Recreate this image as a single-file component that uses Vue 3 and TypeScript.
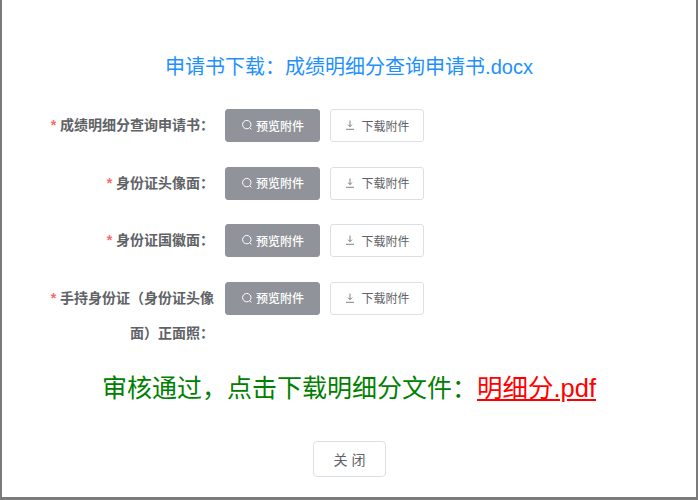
<script setup lang="ts">
const rows: { label: string; lines?: boolean }[] = [
  { label: '成绩明细分查询申请书：' },
  { label: '身份证头像面：' },
  { label: '身份证国徽面：' },
  { label: '手持身份证（身份证头像面）正面照：', lines: true },
]
</script>

<template>
  <div class="overlay">
    <div class="dialog">
      <h2 class="title">申请书下载：成绩明细分查询申请书.docx</h2>
      <div class="form">
        <div v-for="r in rows" :key="r.label" class="row" :class="{ tall: r.lines }">
          <label class="label"><span class="star">*</span> {{ r.label }}</label>
          <div class="actions">
            <button class="btn preview" type="button">
              <svg class="ico" viewBox="0 0 12 12" width="12" height="12"><circle cx="5.800" cy="5.600" r="4.200" fill="none" stroke="currentColor" stroke-width="1" /><path d="M8.700 8.700 10.400 10.400" stroke="currentColor" stroke-width="1" fill="none" /></svg>
              预览附件
            </button>
            <button class="btn download" type="button">
              <svg class="ico" viewBox="0 0 12 12" width="12" height="12"><path d="M6 1.500v6M4 5.600 6 7.600l2-2M2 10.300h8" stroke="currentColor" stroke-width="0.800" fill="none" /></svg>
              下载附件
            </button>
          </div>
        </div>
      </div>
      <p class="result">审核通过，点击下载明细分文件：<a class="link">明细分.pdf</a></p>
      <div class="footer"><button class="close" type="button">关 闭</button></div>
    </div>
  </div>
</template>

<style scoped>
.overlay {
  width: 698px;
  height: 500px;
  box-sizing: border-box;
  padding: 0 2px 3px 2px;
  background: #7b7b7b;
  font-family: "Liberation Sans", "Noto Sans CJK SC", sans-serif;
  overflow: hidden;
}
.dialog {
  height: 497px;
  background: #fff;
  display: flex;
  flex-direction: column;
}
.title {
  margin: 0;
  padding-top: 53px;
  height: 56px;
  line-height: 28px;
  font-size: 20px;
  font-weight: 400;
  text-align: center;
  color: #1e90ff;
}
.form {
  display: flex;
  flex-direction: column;
  gap: 24.5px;
}
.row {
  display: flex;
  align-items: flex-start;
  height: 33px;
}
.row.tall {
  height: 70px;
}
.label {
  width: 212px;
  box-sizing: border-box;
  padding-left: 48px;
  text-align: right;
  font-size: 14px;
  font-weight: 700;
  line-height: 35px;
  color: #606266;
  margin-top: -1px;
}
.star {
  color: #f56c6c;
}
.actions {
  margin-left: 11px;
  display: flex;
  gap: 10px;
}
.btn {
  height: 33px;
  box-sizing: border-box;
  border-radius: 3px;
  font-family: inherit;
  font-size: 12px;
  display: flex;
  align-items: center;
  justify-content: center;
  gap: 3px;
  padding: 0 0 1px;
}
.preview {
  width: 95px;
  background: #909399;
  border: 1px solid #909399;
  color: #fff;
  font-weight: 500;
}
.download {
  width: 94px;
  background: #fff;
  border: 1px solid #dcdfe6;
  color: #606266;
  gap: 5px;
}
.ico {
  flex: none;
}
.result {
  margin: 0;
  margin-top: 19px;
  height: 34px;
  text-align: center;
  font-size: 25px;
  line-height: 34px;
  color: #008000;
}
.link {
  font-size: 25.5px;
  color: #ff0000;
  text-decoration: underline;
}
.footer {
  margin-top: 36px;
  padding-left: 1px;
  display: flex;
  justify-content: center;
}
.close {
  width: 73px;
  height: 36px;
  box-sizing: border-box;
  background: #fff;
  border: 1px solid #dcdfe6;
  border-radius: 4px;
  font-family: inherit;
  font-size: 14px;
  color: #606266;
  padding: 0;
}
</style>
